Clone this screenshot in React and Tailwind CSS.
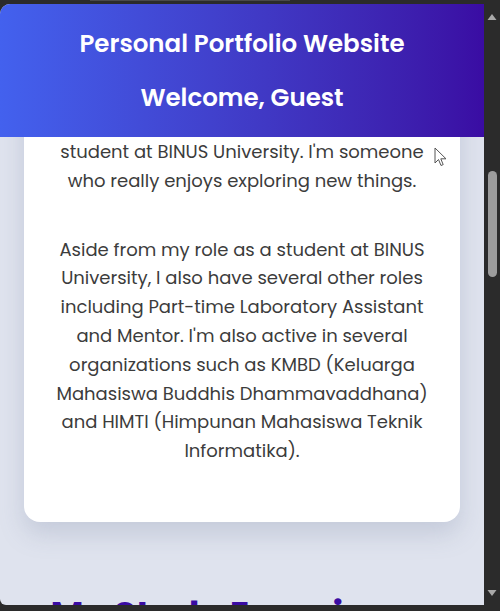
import React from "react";

const bodyFont = { fontFamily: '"Poppins", "Open Sans", sans-serif' };

export default function App() {
  return (
    <div className="w-[500px] h-[611px] bg-[#2b2b2b] flex flex-col overflow-hidden" style={bodyFont}>
      <div className="h-[4px] flex shrink-0">
        <div className="ml-[90px] w-[200px] h-[1px] bg-[#4a4a4a]" />
      </div>
      <div className="flex h-[601px]">
        <div className="relative w-[484px] h-[601px] overflow-hidden rounded-tl-[10px] rounded-bl-[6px] bg-[#dfe3ee]">
          <div className="flex flex-col items-center">
            <div className="w-[436px] bg-white rounded-[16px] shadow-[0_12px_24px_rgba(120,130,160,0.25)] pt-[134px] pb-[56px] text-center text-[18px] leading-[28.8px] text-[#3c3c3c]">
              <p>
                student at BINUS University. I'm someone
                <br />
                who really enjoys exploring new things.
              </p>
              <p className="mt-[40px]">
                Aside from my role as a student at BINUS
                <br />
                University, I also have several other roles
                <br />
                including Part-time Laboratory Assistant
                <br />
                and Mentor. I'm also active in several
                <br />
                organizations such as KMBD (Keluarga
                <br />
                Mahasiswa Buddhis Dhammavaddhana)
                <br />
                and HIMTI (Himpunan Mahasiswa Teknik
                <br />
                Informatika).
              </p>
            </div>
            <h2 className="mt-[72px] text-[36px] leading-[43px] font-bold text-[#3a0ca3] text-center">
              My Study Experience
            </h2>
          </div>

          <div className="absolute top-0 left-0 right-0 h-[133px] bg-gradient-to-r from-[#4361ee] to-[#3a0ca3] flex flex-col items-center text-white font-semibold text-[24.5px]">
            <h1 className="mt-[23px] leading-[34px]">Personal Portfolio Website</h1>
            <h2 className="mt-[20px] leading-[34px]">Welcome, Guest</h2>
          </div>

          <svg className="absolute left-[434px] top-[143px]" width="14" height="20" viewBox="0 0 14 20">
            <path d="M1 1 L1 16 L4.5 12.5 L7 18.5 L9.2 17.6 L6.8 11.8 L12 11.8 Z" fill="white" stroke="#555" strokeWidth="1" strokeLinejoin="round" />
          </svg>
        </div>
        <div className="w-[16px] h-[601px] bg-[#2b2b2b] flex flex-col items-center">
          <svg className="mt-[9px]" width="10" height="8" viewBox="0 0 10 8">
            <path d="M5 1 L9.5 7 L0.5 7 Z" fill="#a9a9a9" />
          </svg>
          <div className="mt-[150px] w-[9px] h-[106px] rounded-full bg-[#9c9c9c]" />
          <div className="flex-1" />
          <svg className="mb-[8px]" width="10" height="8" viewBox="0 0 10 8">
            <path d="M5 7 L9.5 1 L0.5 1 Z" fill="#a9a9a9" />
          </svg>
        </div>
      </div>
    </div>
  );
}
